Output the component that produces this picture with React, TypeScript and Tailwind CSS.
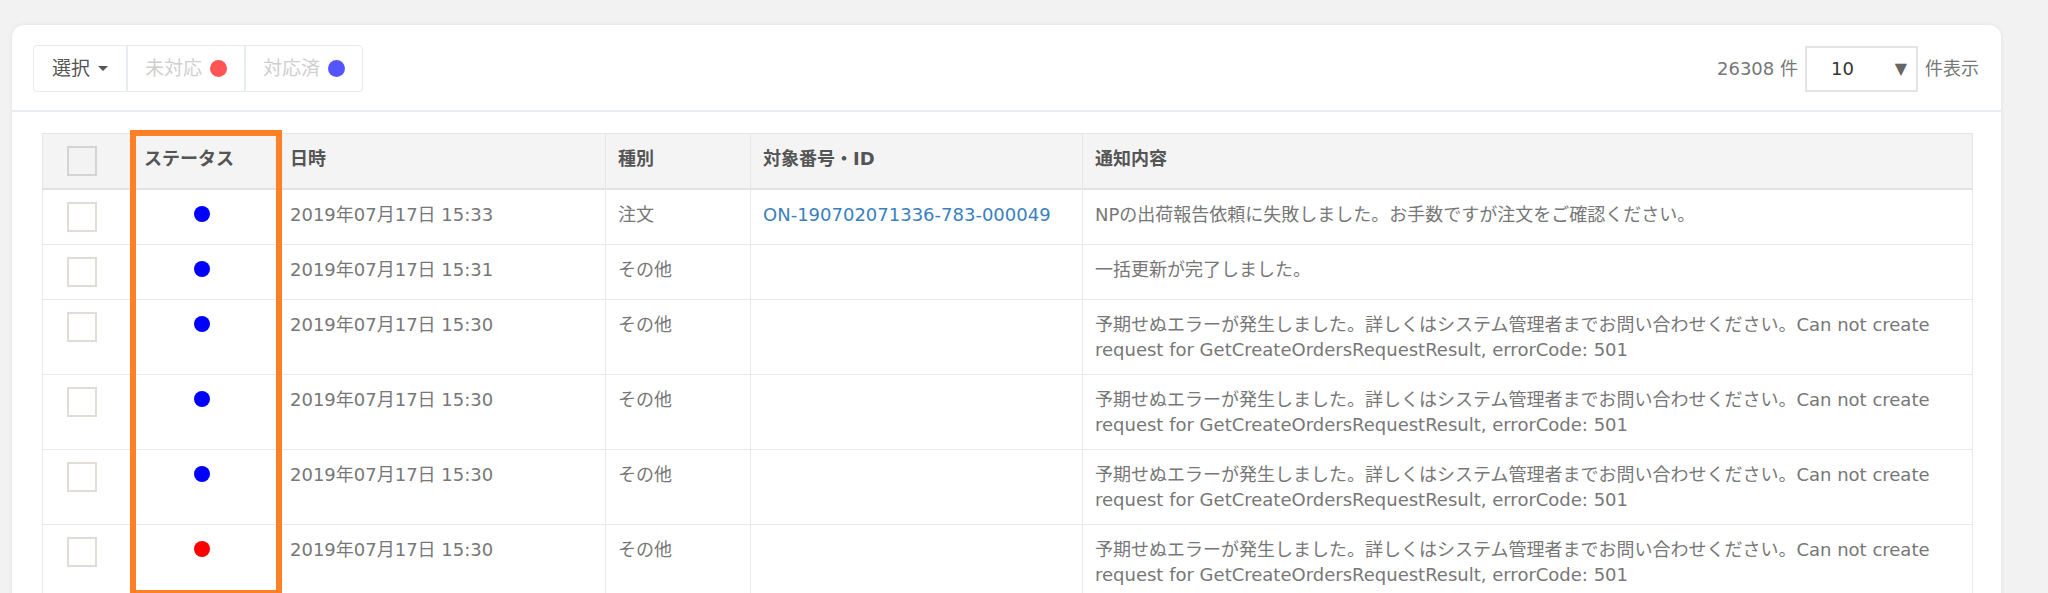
import type { ReactNode } from 'react';

type Row = {
  status: 'blue' | 'red';
  date: string;
  type: string;
  id?: string;
  msg: string;
};

const ERROR_MSG =
  '予期せぬエラーが発生しました。詳しくはシステム管理者までお問い合わせください。Can not create request for GetCreateOrdersRequestResult, errorCode: 501';

const ROWS: Row[] = [
  {
    status: 'blue',
    date: '2019年07月17日 15:33',
    type: '注文',
    id: 'ON-190702071336-783-000049',
    msg: 'NPの出荷報告依頼に失敗しました。お手数ですが注文をご確認ください。',
  },
  { status: 'blue', date: '2019年07月17日 15:31', type: 'その他', msg: '一括更新が完了しました。' },
  { status: 'blue', date: '2019年07月17日 15:30', type: 'その他', msg: ERROR_MSG },
  { status: 'blue', date: '2019年07月17日 15:30', type: 'その他', msg: ERROR_MSG },
  { status: 'blue', date: '2019年07月17日 15:30', type: 'その他', msg: ERROR_MSG },
  { status: 'red', date: '2019年07月17日 15:30', type: 'その他', msg: ERROR_MSG },
];

function Checkbox({ header = false }: { header?: boolean }) {
  return (
    <span
      className={`ml-3 block h-[30px] w-[30px] border-2 ${
        header ? 'border-[#d4d4d4] bg-[#f3f3f3]' : 'border-[#e0ddd7] bg-white'
      }`}
    />
  );
}

function Th({ children }: { children?: ReactNode }) {
  return (
    <th className="border border-b-2 border-[#e6e6e6] border-b-[#e2e2e2] px-3 pt-3 pb-3 text-left align-top text-[18px] font-bold leading-[25px] text-[#555]">
      {children}
    </th>
  );
}

function Td({ children, className = '' }: { children?: ReactNode; className?: string }) {
  return (
    <td className={`border border-[#e9e9e9] px-3 pt-3 pb-3 align-top text-[18px] leading-[25px] text-[#777] ${className}`}>
      {children}
    </td>
  );
}

export default function App() {
  return (
    <div
      className="h-[593px] overflow-hidden bg-[#f2f2f2] pt-[25px] pl-[12px] pr-[47px]"
      style={{ fontFamily: '"DejaVu Sans", "Noto Sans CJK JP", sans-serif' }}
    >
      <div className="min-h-[700px] rounded-t-[12px] bg-white shadow-[0_0_5px_rgba(0,0,0,0.07)]">
        {/* toolbar */}
        <div className="flex items-center justify-between border-b-2 border-[#e8ebef] pt-[20px] pb-[18px] pl-[21px] pr-[22px]">
          <div className="flex h-[47px] rounded-[4px] border border-[#e6e9ee] text-[19px]">
            <button type="button" className="flex items-center gap-2 px-[18px] text-[#555]">
              選択
              <span className="h-0 w-0 border-x-[5px] border-t-[5px] border-x-transparent border-t-[#555]" />
            </button>
            <button type="button" className="flex items-center gap-2 border-l-2 border-[#e8ebef] px-[17px] text-[#cfcfcf]">
              未対応
              <span className="h-[17px] w-[17px] rounded-full bg-[#ff5555]" />
            </button>
            <button type="button" className="flex items-center gap-2 border-l-2 border-[#e8ebef] px-[17px] text-[#cfcfcf]">
              対応済
              <span className="h-[17px] w-[17px] rounded-full bg-[#5555ff]" />
            </button>
          </div>
          <div className="flex items-center gap-[7px] text-[18px] text-[#777]">
            <span>26308 件</span>
            <div className="flex h-[46px] w-[113px] items-center justify-between border-2 border-[#e4e4e4] pl-6 pr-[9px]">
              <span className="text-[18px] text-[#333]">10</span>
              <span className="text-[16px] text-[#666]">▼</span>
            </div>
            <span>件表示</span>
          </div>
        </div>

        {/* table */}
        <div className="pt-[21px] pl-[30px] pr-[28px]">
          <div className="relative">
            <table className="w-full table-fixed border-collapse">
              <colgroup>
                <col className="w-[89px]" />
                <col className="w-[146px]" />
                <col className="w-[328px]" />
                <col className="w-[145px]" />
                <col className="w-[332px]" />
                <col />
              </colgroup>
              <thead className="bg-[#f4f4f4]">
                <tr>
                  <Th>
                    <Checkbox header />
                  </Th>
                  <Th>ステータス</Th>
                  <Th>日時</Th>
                  <Th>種別</Th>
                  <Th>対象番号・ID</Th>
                  <Th>通知内容</Th>
                </tr>
              </thead>
              <tbody>
                {ROWS.map((r, i) => (
                  <tr key={i}>
                    <Td>
                      <Checkbox />
                    </Td>
                    <Td>
                      <div className="flex h-[24px] items-center justify-center pr-[6px]">
                        <span
                          className={`h-4 w-4 rounded-full ${r.status === 'red' ? 'bg-[#ff0000]' : 'bg-[#0000ff]'}`}
                        />
                      </div>
                    </Td>
                    <Td>{r.date}</Td>
                    <Td>{r.type}</Td>
                    <Td>{r.id && <a className="text-[#3a80c1]">{r.id}</a>}</Td>
                    <Td>{r.msg}</Td>
                  </tr>
                ))}
              </tbody>
            </table>

            {/* highlight around the status column */}
            <div className="pointer-events-none absolute top-[-3px] left-[88px] h-[466px] w-[152px] border-[6px] border-[#fd8124]" />
          </div>
        </div>
      </div>
    </div>
  );
}
